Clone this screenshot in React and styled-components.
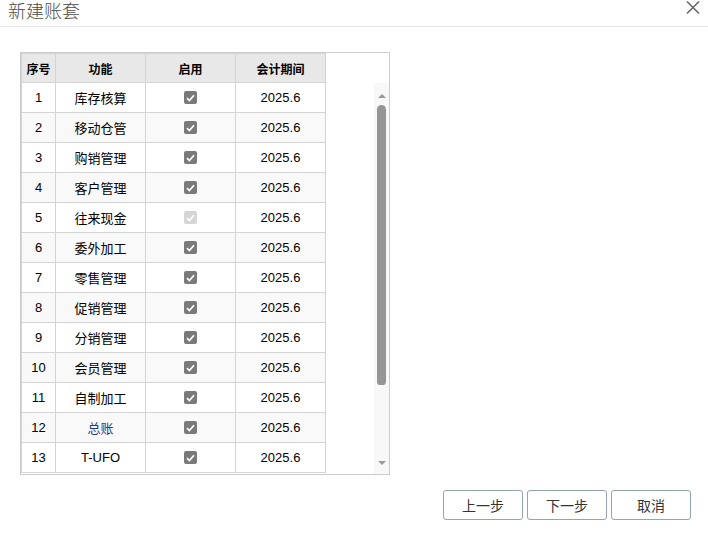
import styled, { createGlobalStyle } from "styled-components";

const GlobalStyle = createGlobalStyle`
  html, body {
    margin: 0;
    padding: 0;
    background: #fff;
  }
  body {
    font-family: "Liberation Sans", "Noto Sans CJK SC", sans-serif;
    color: #000;
  }
  * {
    box-sizing: border-box;
  }
`;

const Dialog = styled.div`
  width: 708px;
  height: 549px;
  background: #fff;
`;

const TitleBar = styled.div`
  height: 27px;
  border-bottom: 1px solid #e6e6e6;
  display: flex;
  justify-content: space-between;
  align-items: flex-start;
  padding: 0 7px 0 8px;
`;

const Title = styled.div`
  font-family: "Noto Sans CJK SC", sans-serif;
  font-size: 18px;
  line-height: 21px;
  color: #4a4a4a;
  font-weight: 300;
`;

const Close = styled.button`
  border: 0;
  background: none;
  padding: 0;
  width: 16px;
  height: 16px;
  display: flex;
  align-items: center;
  justify-content: center;
  cursor: pointer;
`;

const Body = styled.div`
  padding: 25px 17px 0 20px;
`;

const GridBox = styled.div`
  width: 370px;
  height: 423px;
  border: 1px solid #ccc;
  display: flex;
  overflow: hidden;
`;

const TableCol = styled.div`
  width: 305px;
  overflow: hidden;
`;

const Row = styled.div`
  display: grid;
  grid-template-columns: 34px 90px 90px 90px;
  border-left: 1px solid #d4d4d4;
  background: ${(p) => (p.$head ? "#e8e8e8" : p.$alt ? "#f9f9f9" : "#fff")};
  border-top: ${(p) => (p.$head ? "1px solid #d4d4d4" : "0")};
`;

const Cell = styled.div`
  height: ${(p) => (p.$head ? "29px" : "30px")};
  border-right: 1px solid #d4d4d4;
  border-bottom: 1px solid #d4d4d4;
  display: flex;
  align-items: center;
  justify-content: center;
  font-size: ${(p) => (p.$head ? "12px" : "13px")};
  font-weight: ${(p) => (p.$head ? "bold" : "normal")};
  color: ${(p) => p.$color || "#000"};
  font-family: ${(p) =>
    p.$cjk ? '"Noto Sans CJK SC", sans-serif' : '"Liberation Sans", "Noto Sans CJK SC", sans-serif'};
`;

const Check = styled.span`
  width: 13px;
  height: 13px;
  border-radius: 2px;
  background: ${(p) => (p.$disabled ? "#d6d6d6" : "#7a7a7a")};
  display: inline-flex;
  align-items: center;
  justify-content: center;
`;

const ScrollTrack = styled.div`
  margin-left: auto;
  margin-top: 30px;
  width: 15px;
  background: #f8f8f8;
  display: flex;
  flex-direction: column;
  align-items: center;
  padding-top: 11px;
  padding-bottom: 9px;
`;

const Arrow = styled.div`
  width: 0;
  height: 0;
  border-left: 4px solid transparent;
  border-right: 4px solid transparent;
  ${(p) =>
    p.$down
      ? "border-top: 4px solid #999;"
      : "border-bottom: 4px solid #999;"}
`;

const Thumb = styled.div`
  width: 9px;
  height: 280px;
  border-radius: 5px 5px 4px 4px;
  background: #959595;
  margin-top: 7px;
`;

const Spacer = styled.div`
  flex: 1;
`;

const Footer = styled.div`
  display: flex;
  justify-content: flex-end;
  gap: 4px;
  margin-top: 15px;
`;

const Button = styled.button`
  width: 80px;
  height: 30px;
  border: 1px solid #95a3b8;
  border-radius: 3px;
  background: #fff;
  font-family: "Noto Sans CJK SC", sans-serif;
  font-size: 14px;
  color: #333;
  padding: 0;
  cursor: pointer;
`;

const rows = [
  ["库存核算"],
  ["移动仓管"],
  ["购销管理"],
  ["客户管理"],
  ["往来现金", true],
  ["委外加工"],
  ["零售管理"],
  ["促销管理"],
  ["分销管理"],
  ["会员管理"],
  ["自制加工"],
  ["总账", false, "#1f3b8f"],
  ["T-UFO"],
];

const CheckMark = ({ disabled }) => (
  <Check $disabled={disabled}>
    <svg width="9" height="8" viewBox="0 0 9 8">
      <path d="M1 4.2 L3.4 6.5 L8 1.3" fill="none" stroke="#fff" strokeWidth="1.7" />
    </svg>
  </Check>
);

export default function App() {
  return (
    <Dialog>
      <GlobalStyle />
      <TitleBar>
        <Title>新建账套</Title>
        <Close aria-label="close">
          <svg width="16" height="16" viewBox="0 0 16 16">
            <path d="M2 1.5 L14 13.5 M14 1.5 L2 13.5" stroke="#666" strokeWidth="1.6" />
          </svg>
        </Close>
      </TitleBar>
      <Body>
        <GridBox>
          <TableCol>
            <Row $head>
              <Cell $head $cjk>序号</Cell>
              <Cell $head $cjk>功能</Cell>
              <Cell $head $cjk>启用</Cell>
              <Cell $head $cjk>会计期间</Cell>
            </Row>
            {rows.map(([name, disabled, color], i) => (
              <Row key={i} $alt={i % 2 === 1}>
                <Cell>{i + 1}</Cell>
                <Cell $cjk={name !== "T-UFO"} $color={color}>
                  {name}
                </Cell>
                <Cell>
                  <CheckMark disabled={disabled} />
                </Cell>
                <Cell>2025.6</Cell>
              </Row>
            ))}
          </TableCol>
          <ScrollTrack>
            <Arrow />
            <Thumb />
            <Spacer />
            <Arrow $down />
          </ScrollTrack>
        </GridBox>
        <Footer>
          <Button>上一步</Button>
          <Button>下一步</Button>
          <Button>取消</Button>
        </Footer>
      </Body>
    </Dialog>
  );
}
